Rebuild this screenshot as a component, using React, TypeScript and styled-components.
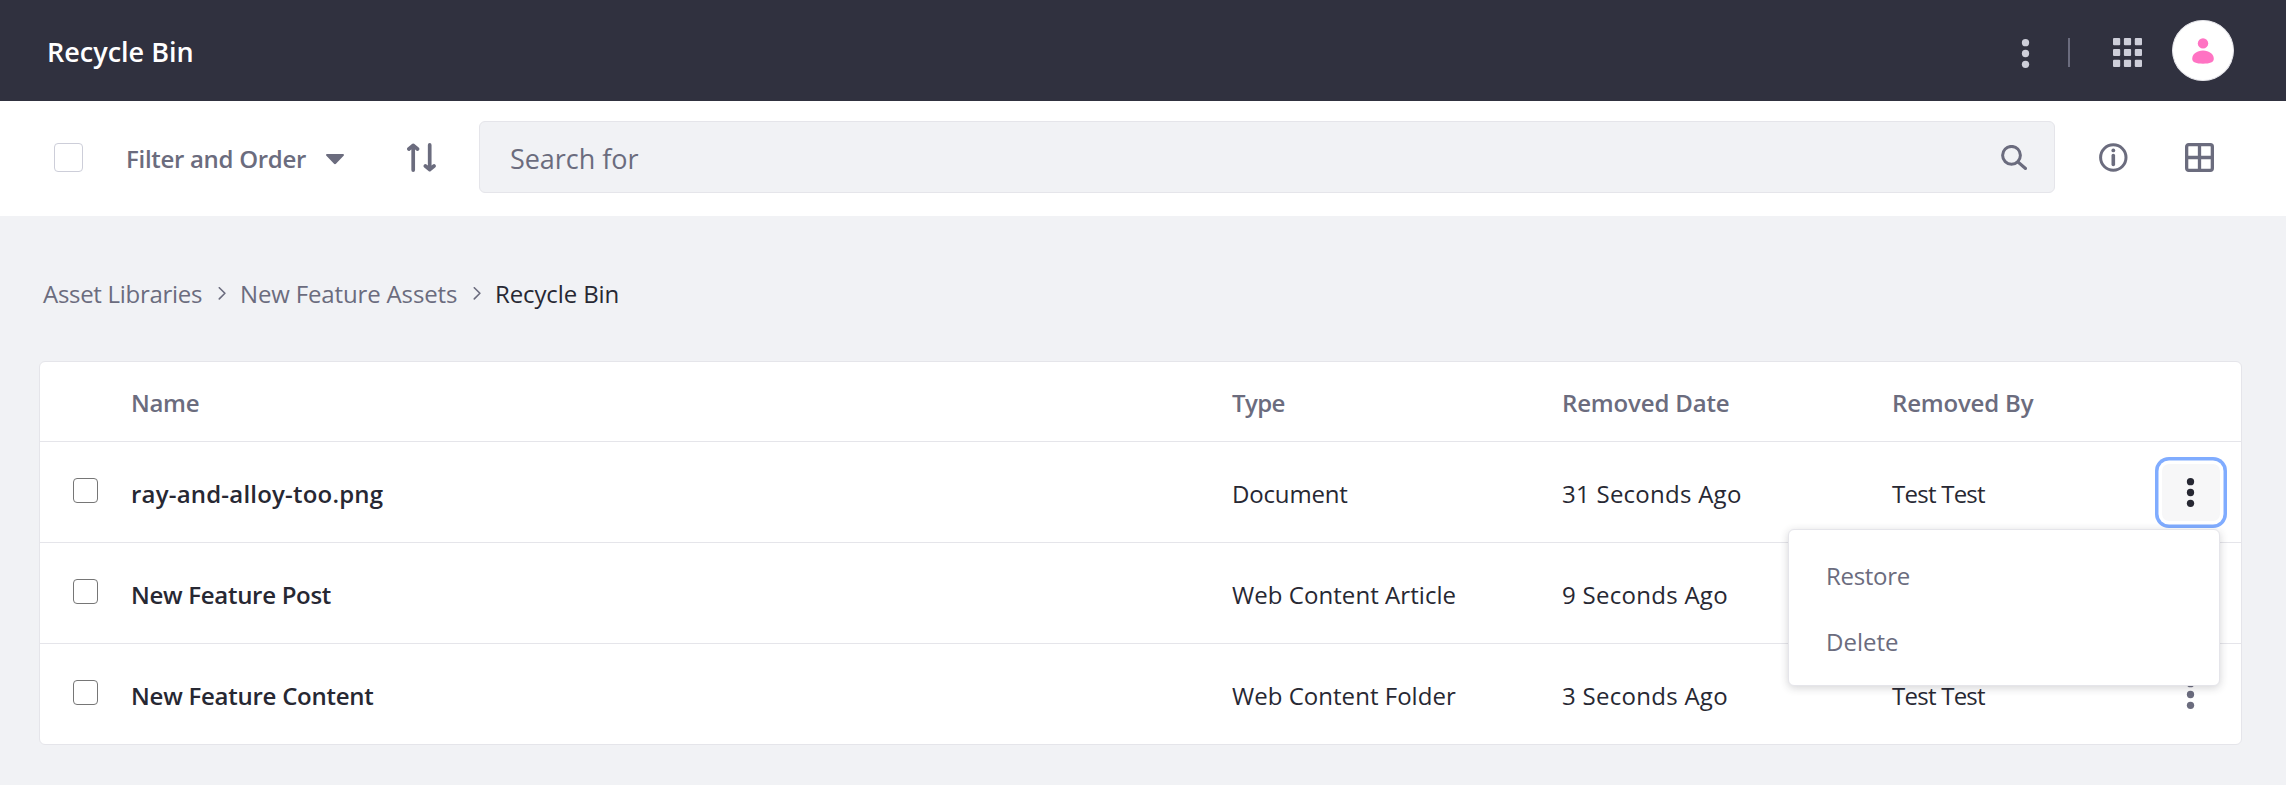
import React from "react";
import styled, { createGlobalStyle, css } from "styled-components";

const color = {
  bar: "#30313f",
  page: "#f1f2f5",
  line: "#e5e5ea",
  muted: "#6b6c7e",
  dark: "#272833",
  light: "#cdced9",
  focus: "#80acff",
  pink: "#ff73c3",
};

const GlobalStyle = createGlobalStyle`
  * { box-sizing: border-box; }
  body {
    margin: 0;
    background: ${color.page};
    font-family: "Open Sans", "Noto Sans", sans-serif;
    font-size: 24px;
    line-height: 35px;
    color: ${color.dark};
  }
  svg { display: block; flex: none; }
`;

const Page = styled.div`
  display: flex;
  flex-direction: column;
  min-height: 785px;
`;

const Text = styled.span<{ $track?: number; $strong?: boolean }>`
  white-space: nowrap;
  letter-spacing: ${(p) => p.$track ?? 0}px;
  font-weight: ${(p) => (p.$strong ? 600 : 400)};
`;

/* Top bar */
const TopBar = styled.header`
  display: flex;
  align-items: center;
  justify-content: space-between;
  height: 101px;
  padding: 0 52px 0 47px;
  background: ${color.bar};
  color: #fff;
`;

const Title = styled.h1`
  margin: 2px 0 0;
  font-size: 27px;
  line-height: 37px;
  font-weight: 600;
`;

const TopActions = styled.div`
  display: flex;
  align-items: center;
  color: ${color.light};
`;

const TopIcon = styled.span<{ $gap: number; $top?: number }>`
  margin: ${(p) => p.$top ?? 4}px ${(p) => p.$gap}px 0 0;
`;

const Divider = styled.span`
  width: 2px;
  height: 29px;
  margin: 4px 43px 0 0;
  background: ${color.muted};
`;

const Avatar = styled.span`
  display: flex;
  align-items: center;
  justify-content: center;
  width: 62px;
  height: 61px;
  border: 1px solid ${color.line};
  border-radius: 50%;
  background: #fff;
  color: ${color.pink};
`;

/* Toolbar */
const Toolbar = styled.div`
  height: 115px;
  padding: 20px 72px 0 54px;
  background: #fff;
  color: ${color.muted};
`;

const ToolbarRow = styled.div`
  display: flex;
  align-items: center;
  height: 73px;
`;

const Checkbox = styled.span<{ $size: number; $color: string }>`
  flex: none;
  width: ${(p) => p.$size}px;
  height: ${(p) => p.$size}px;
  border: 1px solid ${(p) => p.$color};
  border-radius: 4px;
  background: #fff;
`;

const FilterButton = styled.div`
  display: flex;
  align-items: center;
  justify-content: space-between;
  width: 218px;
  margin: 2px 63px 0 43px;
`;

const SearchBox = styled.div`
  display: flex;
  flex: 1;
  align-items: center;
  justify-content: space-between;
  align-self: flex-start;
  height: 72px;
  margin: 0 44px 0 43px;
  padding: 0 27px 0 30px;
  border: 1px solid ${color.line};
  border-radius: 6px;
  background: ${color.page};
`;

const Placeholder = styled(Text)`
  padding-top: 3px;
  font-size: 27px;
  line-height: 37px;
`;

const InfoSlot = styled.span`
  margin-right: 57px;
`;

/* Breadcrumb */
const Breadcrumb = styled.nav`
  display: flex;
  align-items: center;
  margin: 60px 0 50px;
  padding-left: 43px;
  color: ${color.muted};
`;

const Crumb = styled(Text)<{ $width?: number; $current?: boolean }>`
  ${(p) => p.$width && css`width: ${p.$width}px;`}
  ${(p) => p.$current && css`color: ${color.dark};`}
`;

const CrumbArrow = styled.span<{ $after: number }>`
  margin-right: ${(p) => p.$after}px;
`;

/* Table */
const Card = styled.section`
  margin: 0 44px 0 39px;
  border: 1px solid ${color.line};
  border-radius: 6px;
  background: #fff;
`;

const Row = styled.div<{ $head?: boolean }>`
  display: grid;
  grid-template-columns: 91px 1101px 330px 330px 1fr;
  align-items: center;
  height: ${(p) => (p.$head ? 80 : 101)}px;
  border-bottom: 1px solid ${color.line};
  color: ${(p) => (p.$head ? color.muted : color.dark)};
  &:last-child {
    height: 100px;
    border-bottom: 0;
  }
`;

const Cell = styled.div<{ $head?: boolean }>`
  display: flex;
  padding-top: ${(p) => (p.$head ? 2 : 3)}px;
`;

const CheckCell = styled.div`
  display: flex;
  padding: 0 0 3px 33px;
`;

const OwnerCell = styled.div`
  display: grid;
  grid-template-columns: 1fr 79px;
  align-items: center;
`;

const ActionCell = styled.div`
  position: relative;
  display: flex;
  justify-content: flex-end;
  padding: 1px 21px 0 0;
`;

const ActionButton = styled.span<{ $active?: boolean }>`
  display: flex;
  justify-content: center;
  width: 58px;
  height: 57px;
  padding: 14px 1px 0 0;
  border-radius: 7px;
  color: ${color.muted};
  ${(p) =>
    p.$active &&
    css`
      color: ${color.dark};
      background: #f7f7f8;
      box-shadow: 0 0 0 3.5px #fff, 0 0 0 7px ${color.focus};
    `}
`;

const Menu = styled.div`
  position: absolute;
  z-index: 2;
  top: 66px;
  right: 21px;
  width: 432px;
  height: 157px;
  padding-top: 12px;
  border: 1px solid ${color.line};
  border-radius: 6px;
  background: #fff;
  color: ${color.muted};
  box-shadow: 0 2px 8px rgba(39, 40, 51, 0.2);
`;

const MenuItem = styled.div`
  display: flex;
  height: 66px;
  padding: 16px 37px 0;
`;

/* Icons */
const DotsIcon = () => (
  <svg width="29" height="29" viewBox="0 0 29 29" fill="currentColor">
    <circle cx="14.5" cy="3.65" r="3.65" />
    <circle cx="14.5" cy="14.5" r="3.65" />
    <circle cx="14.5" cy="25.35" r="3.65" />
  </svg>
);

const GridIcon = () => (
  <svg width="29" height="29" viewBox="0 0 29 29" fill="currentColor">
    {[0, 10.9, 21.8].map((y) =>
      [0, 10.9, 21.8].map((x) => (
        <rect key={`${x}-${y}`} x={x} y={y} width="7.2" height="7.2" rx="1" />
      ))
    )}
  </svg>
);

const UserIcon = () => (
  <svg width="22" height="26" viewBox="0 0 22 26" fill="currentColor">
    <circle cx="11" cy="5.4" r="5.2" />
    <path d="M11 12.6c6.2 0 10.8 3.6 10.8 8.2 0 3.6-4 4.9-10.8 4.9S.2 24.400.2 20.800C.2 16.200 4.800 12.600 11 12.600z" />
  </svg>
);

const CaretIcon = () => (
  <svg width="18" height="13" viewBox="0 0 18 13" fill="currentColor">
    <path d="M1.200 2h15.600c1.100 0 1.500 1.100.8 1.800L10.200 11.600c-.7.700-1.700.7-2.400 0L.4 3.800C-.3 3.100.1 2 1.200 2z" />
  </svg>
);

const SortIcon = () => (
  <svg
    width="29"
    height="29"
    viewBox="0 0 29 29"
    fill="none"
    stroke="currentColor"
    strokeWidth="3.7"
    strokeLinecap="round"
    strokeLinejoin="round"
  >
    <path d="M6.200 27.100V2.400M1.900 6L6.200 2.400L10.500 6" />
    <path d="M22.700 1.900V26.600M18.400 23L22.700 26.600L27 23" />
  </svg>
);

const SearchIcon = () => (
  <svg
    width="26"
    height="25"
    viewBox="0 0 26 25"
    fill="none"
    stroke="currentColor"
    strokeWidth="3"
    strokeLinecap="round"
  >
    <circle cx="10.500" cy="10.300" r="8.900" />
    <path d="M17 17l7.500 6.500" />
  </svg>
);

const InfoIcon = () => (
  <svg width="29" height="29" viewBox="0 0 29 29" fill="none" stroke="currentColor">
    <circle cx="14.300" cy="14.500" r="12.700" strokeWidth="3" />
    <circle cx="14.300" cy="7.400" r="1.900" fill="currentColor" stroke="none" />
    <path d="M14.300 12.600v8.800" strokeWidth="3.600" strokeLinecap="round" />
  </svg>
);

const CardsIcon = () => (
  <svg width="29" height="29" viewBox="0 0 29 29" fill="none" stroke="currentColor" strokeWidth="3.300">
    <rect x="1.650" y="1.650" width="25.700" height="25.700" rx="2" />
    <path d="M14.500 1.600v25.800M1.600 14.500h25.800" />
  </svg>
);

const ChevronIcon = () => (
  <svg
    width="8"
    height="14"
    viewBox="0 0 8 14"
    fill="none"
    stroke="currentColor"
    strokeWidth="1.600"
    strokeLinecap="round"
    strokeLinejoin="round"
  >
    <path d="M1.300 .700L6.900 6.300L1.300 11.900" />
  </svg>
);

type Label = [text: string, track: number];

const columns: Label[] = [
  ["Name", -0.3],
  ["Type", -0.6],
  ["Removed Date", -0.16],
  ["Removed By", -0.18],
];

const rows: { cells: Label[]; open?: boolean }[] = [
  {
    cells: [
      ["ray-and-alloy-too.png", 0.2],
      ["Document", -0.17],
      ["31 Seconds Ago", 0.26],
      ["Test Test", -0.75],
    ],
    open: true,
  },
  {
    cells: [
      ["New Feature Post", -0.29],
      ["Web Content Article", 0.06],
      ["9 Seconds Ago", 0.28],
      ["Test Test", -0.75],
    ],
  },
  {
    cells: [
      ["New Feature Content", -0.25],
      ["Web Content Folder", 0.03],
      ["3 Seconds Ago", 0.28],
      ["Test Test", -0.75],
    ],
  },
];

const menuItems: Label[] = [
  ["Restore", -0.3],
  ["Delete", 0],
];

function OwnerAndActions({ label, open }: { label: Label; open?: boolean }) {
  return (
    <OwnerCell>
      <Cell>
        <Text $track={label[1]}>{label[0]}</Text>
      </Cell>
      <ActionCell>
        <ActionButton $active={open}>
          <DotsIcon />
        </ActionButton>
        {open && (
          <Menu>
            {menuItems.map(([text, track]) => (
              <MenuItem key={text}>
                <Text $track={track}>{text}</Text>
              </MenuItem>
            ))}
          </Menu>
        )}
      </ActionCell>
    </OwnerCell>
  );
}

export default function App() {
  return (
    <Page>
      <GlobalStyle />
      <TopBar>
        <Title>Recycle Bin</Title>
        <TopActions>
          <TopIcon $gap={28} $top={5}>
            <DotsIcon />
          </TopIcon>
          <Divider />
          <TopIcon $gap={30}>
            <GridIcon />
          </TopIcon>
          <Avatar>
            <UserIcon />
          </Avatar>
        </TopActions>
      </TopBar>

      <Toolbar>
        <ToolbarRow>
          <Checkbox $size={29} $color={color.light} />
          <FilterButton>
            <Text $strong $track={-0.3}>
              Filter and Order
            </Text>
            <CaretIcon />
          </FilterButton>
          <SortIcon />
          <SearchBox>
            <Placeholder $track={-0.05}>Search for</Placeholder>
            <SearchIcon />
          </SearchBox>
          <InfoSlot>
            <InfoIcon />
          </InfoSlot>
          <CardsIcon />
        </ToolbarRow>
      </Toolbar>

      <Breadcrumb>
        <Crumb $track={-0.29} $width={175}>
          Asset Libraries
        </Crumb>
        <CrumbArrow $after={14}>
          <ChevronIcon />
        </CrumbArrow>
        <Crumb $track={-0.15} $width={233}>
          New Feature Assets
        </Crumb>
        <CrumbArrow $after={14}>
          <ChevronIcon />
        </CrumbArrow>
        <Crumb $track={-0.11} $current>
          Recycle Bin
        </Crumb>
      </Breadcrumb>

      <Card>
        <Row $head>
          <span />
          {columns.map(([text, track]) => (
            <Cell key={text} $head>
              <Text $strong $track={track}>
                {text}
              </Text>
            </Cell>
          ))}
        </Row>
        {rows.map((row) => (
          <Row key={row.cells[0][0]}>
            <CheckCell>
              <Checkbox $size={25} $color="#767676" />
            </CheckCell>
            {row.cells.slice(0, 3).map(([text, track], i) => (
              <Cell key={text}>
                <Text $strong={i === 0} $track={track}>
                  {text}
                </Text>
              </Cell>
            ))}
            <OwnerAndActions label={row.cells[3]} open={row.open} />
          </Row>
        ))}
      </Card>
    </Page>
  );
}
